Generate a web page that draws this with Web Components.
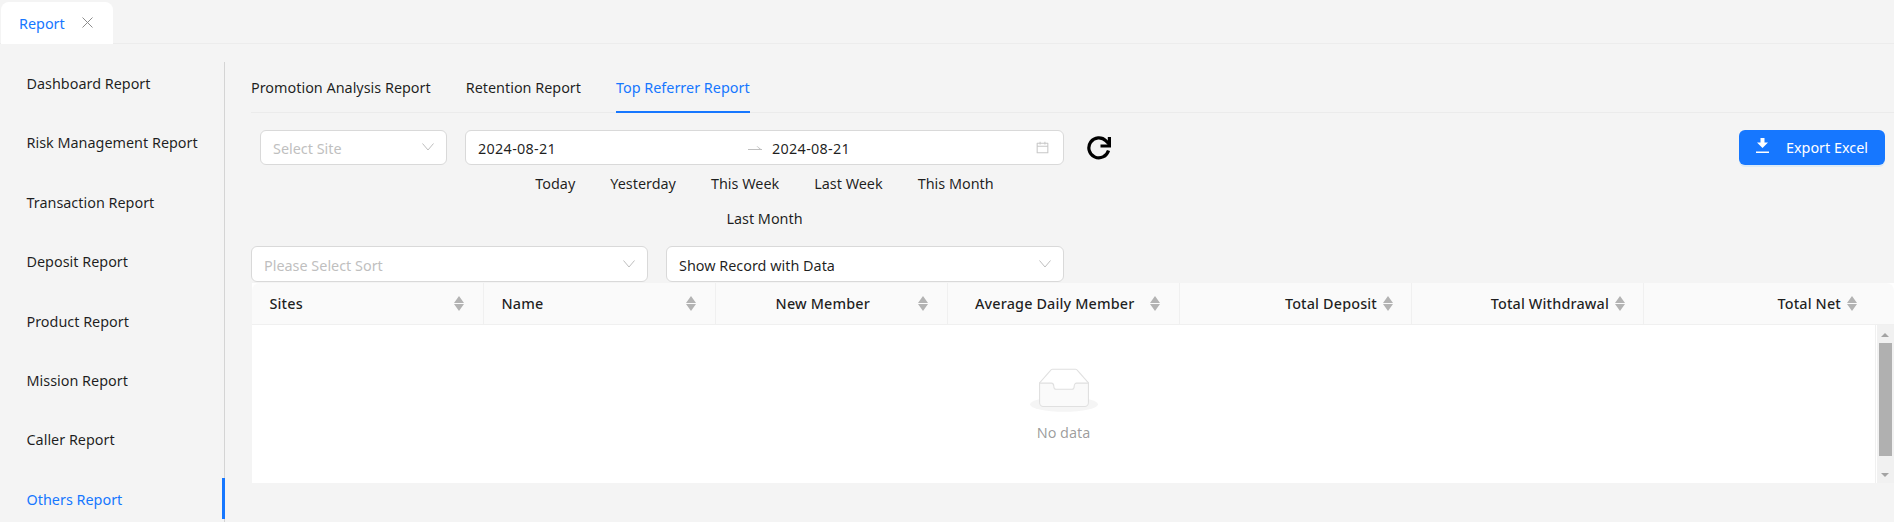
<!DOCTYPE html>
<html>
<head>
<meta charset="utf-8">
<title>Report</title>
<style>
  html, body { margin: 0; height: 100%; overflow: hidden; }
  body { background: #f4f4f4; color: rgba(0,0,0,.88); font: 14.4px/22px "Noto Sans", "Open Sans", sans-serif; }
</style>
</head>
<body>
<template id="drop-select">
  <style>
    :host { display: flex; align-items: center; box-sizing: border-box; height: 36px; background: #fff; border: 1px solid #d9d9d9; border-radius: 6px; padding: 2px 12px 0; }
    span { flex: 1; white-space: nowrap; }
    :host([placeholder]) span { color: #bfbfbf; }
    svg { width: 12px; height: 8px; fill: none; stroke: #bfbfbf; margin-top: -3px; }
  </style>
  <span><slot></slot></span>
  <svg viewBox="0 0 12 8"><path d="M.5.500 6 7 11.500.500"/></svg>
</template>

<template id="date-range">
  <style>
    :host { display: flex; align-items: center; box-sizing: border-box; height: 35px; background: #fff; border: 1px solid #d9d9d9; border-radius: 6px; padding: 2px 13px 0 12px; letter-spacing: .3px; }
    .from { flex: none; width: 270px; }
    .to { flex: 1; }
    .arrow { flex: none; width: 14px; height: 8px; margin-right: 10px; fill: #bfbfbf; margin-top: -2px; }
    .cal { flex: none; width: 15px; height: 15px; fill: #c8c8c8; margin-top: -3px; }
  </style>
  <span class="from"><slot name="from"></slot></span>
  <svg class="arrow" viewBox="0 0 14 8"><path d="M0 5h14v1H0zM9 2l4.500 3.500H12L8.500 2z"/></svg>
  <span class="to"><slot name="to"></slot></span>
  <svg class="cal" viewBox="0 0 1024 1024"><path d="M880 184H712v-64c0-4.400-3.600-8-8-8h-56c-4.400 0-8 3.600-8 8v64H384v-64c0-4.400-3.600-8-8-8h-56c-4.400 0-8 3.600-8 8v64H144c-17.700 0-32 14.300-32 32v664c0 17.700 14.300 32 32 32h736c17.700 0 32-14.300 32-32V216c0-17.700-14.300-32-32-32zm-40 656H184V460h656v380zM184 392V256h128v48c0 4.400 3.600 8 8 8h56c4.400 0 8-3.600 8-8v-48h256v48c0 4.400 3.600 8 8 8h56c4.400 0 8-3.600 8-8v-48h128v136H184z"/></svg>
</template>

<template id="top-tab">
  <style>
    :host { display: flex; align-items: center; gap: 17px; box-sizing: border-box; width: 112px; height: 42px; margin: 0 0 -1px 1px; padding: 2px 18px 0; background: #fff; border-radius: 8px 8px 0 0; color: #1677ff; }
    svg { width: 11px; height: 11px; stroke: #8c8c8c; stroke-width: 1; fill: none; margin-top: -3px; }
  </style>
  <slot></slot>
  <svg viewBox="0 0 11 11"><path d="M.5.500l10 10M10.500.500l-10 10"/></svg>
</template>

<template id="side-nav">
  <style>
    :host { display: flex; flex-direction: column; gap: 18.400px; box-sizing: border-box; width: 225px; flex: none; height: 478px; margin-top: 18px; border-right: 1px solid #d4d4d4; }
  </style>
  <slot></slot>
</template>

<template id="side-item">
  <style>
    :host { display: flex; align-items: center; height: 41px; padding: 3px 0 0 26.500px; box-sizing: border-box; white-space: nowrap; position: relative; flex: none; }
    :host([active]) { color: #1677ff; }
    :host([active])::after { content: ""; position: absolute; right: -1px; top: 0; bottom: 0; width: 3px; background: #1677ff; }
  </style>
  <slot></slot>
</template>

<template id="sub-tabs">
  <style>
    :host { display: flex; gap: 35px; height: 50px; margin-left: 26px; border-bottom: 1px solid #ebebeb; box-sizing: border-box; }
  </style>
  <slot></slot>
</template>

<template id="sub-tab">
  <style>
    :host { display: flex; align-items: center; height: 50px; box-sizing: border-box; position: relative; white-space: nowrap; }
    :host([active]) { color: #1677ff; }
    :host([active])::after { content: ""; position: absolute; left: 0; right: 0; bottom: 0; height: 2px; background: #1677ff; }
  </style>
  <slot></slot>
</template>

<template id="presets-row">
  <style>
    :host { display: flex; flex-wrap: wrap; justify-content: center; gap: 0 35px; width: 500px; margin: 0 auto; padding-top: 1px; }
    ::slotted(span) { height: 35px; line-height: 35px; }
  </style>
  <slot></slot>
</template>

<template id="data-table">
  <style>
    :host { display: block; background: #fff; margin-left: 27px; }
    .head { display: grid; grid-template-columns: repeat(7, 232px) 1fr; height: 42px; background: #fafafa; border-bottom: 1px solid #f0f0f0; box-sizing: border-box; border-radius: 8px 8px 0 0; }
    .body { display: flex; height: 158px; }
    .empty { flex: 1; display: flex; flex-direction: column; align-items: center; padding-top: 43px; color: rgba(0,0,0,.4); border-right: 1px solid #f0f0f0; }
    .empty svg { width: 68px; height: 44px; margin-bottom: 10px; }
    .bar { width: 17px; margin-left: 1px; background: #f1f1f1; position: relative; }
    .thumb { position: absolute; left: 2px; right: 2px; top: 18px; height: 113px; background: #b0b0b0; }
    .tri { position: absolute; left: 4px; width: 0; height: 0; border-left: 4px solid transparent; border-right: 4px solid transparent; }
    .up { top: 8px; border-bottom: 4px solid #a3a3a3; }
    .down { bottom: 6px; border-top: 4px solid #a3a3a3; }
  </style>
  <div class="head"><slot name="head"></slot><div></div></div>
  <div class="body">
    <div class="empty">
      <svg viewBox="0 0 64 41"><g transform="translate(0 1)" fill="none" fill-rule="evenodd"><ellipse cx="32" cy="33" rx="32" ry="7" fill="#f5f5f5"/><g stroke="#e0e0e0" fill="#fff"><path d="M55 12.760 44.850 1.260C44.360.500 43.650 0 42.900 0H21.100c-.750 0-1.460.500-1.950 1.260L9 12.760V22h46v-9.240z"/><path d="M41.610 15.930c0-1.610 1-2.930 2.240-2.930H55v18.140C55 33.260 53.680 35 52.050 35h-40.100C10.320 35 9 33.260 9 31.140V13h11.150c1.240 0 2.240 1.320 2.240 2.930 0 1.610 1.010 2.910 2.250 2.910h14.720c1.240 0 2.250-1.310 2.250-2.910z" fill="#fafafa"/></g></g></svg>
      <slot name="empty"></slot>
    </div>
    <div class="bar"><div class="tri up"></div><div class="thumb"></div><div class="tri down"></div></div>
  </div>
</template>

<template id="head-cell">
  <style>
    :host { display: flex; align-items: center; gap: 6px; padding: 1px 20px 0 17.500px; font-weight: 500; letter-spacing: .15px; position: relative; white-space: nowrap; }
    :host([align="right"]) { padding-right: 19px; }
    .t { flex: 1; }
    :host([align="center"]) .t { text-align: center; }
    :host([align="right"]) .t { text-align: right; }
    :host([sep])::after { content: ""; position: absolute; right: 0; top: 0; bottom: 0; width: 1px; background: #f0f0f0; }
    svg { flex: none; width: 10px; height: 15px; fill: #b3b3b3; margin-top: -1px; }
  </style>
  <span class="t"><slot></slot></span>
  <svg viewBox="0 0 10 15"><path d="M5 0l5 7H0zM5 15l5-7H0z"/></svg>
</template>

<script>
  class ShadowBase extends HTMLElement {
    connectedCallback() {
      if (this.shadowRoot) return;
      var template = document.getElementById(this.constructor.templateId);
      this.attachShadow({ mode: 'open' }).appendChild(template.content.cloneNode(true));
    }
  }
  function define(name) {
    customElements.define(name, class extends ShadowBase {
      static get templateId() { return name; }
    });
  }
  ['drop-select', 'date-range', 'top-tab', 'side-nav', 'side-item', 'sub-tabs', 'sub-tab', 'presets-row', 'data-table', 'head-cell'].forEach(define);

  class ExportButton extends HTMLElement {
    connectedCallback() {
      if (this.shadowRoot) return;
      this.attachShadow({ mode: 'open' }).innerHTML = `
        <style>
          :host { display: flex; align-items: center; justify-content: center; gap: 17px; box-sizing: border-box; width: 146px; height: 35px; background: #1677ff; color: #fff; border-radius: 6px; box-shadow: 0 2px 0 rgba(5,145,255,.1); white-space: nowrap; }
          svg { width: 13px; height: 15px; fill: #fff; margin-top: -5px; }
        </style>
        <svg viewBox="0 0 13 15"><path d="M4.500 0h4v4.500H12L6.500 10 1 4.500h3.500zM0 13.500h13V15H0z"/></svg>
        <slot></slot>`;
    }
  }
  customElements.define('export-button', ExportButton);
</script>

<div style="display:flex;flex-direction:column;height:522px;overflow:hidden">
  <div style="display:flex;align-items:flex-end;height:44px;flex:none;box-sizing:border-box;border-bottom:1px solid #ececec">
    <top-tab>Report</top-tab>
  </div>
  <div style="display:flex;flex:1;min-width:0">
    <side-nav>
      <side-item>Dashboard Report</side-item>
      <side-item>Risk Management Report</side-item>
      <side-item>Transaction Report</side-item>
      <side-item>Deposit Report</side-item>
      <side-item>Product Report</side-item>
      <side-item>Mission Report</side-item>
      <side-item>Caller Report</side-item>
      <side-item active>Others Report</side-item>
    </side-nav>
    <div style="flex:1;min-width:0;display:flex;flex-direction:column;padding-top:19px">
      <sub-tabs>
        <sub-tab>Promotion Analysis Report</sub-tab>
        <sub-tab>Retention Report</sub-tab>
        <sub-tab active>Top Referrer Report</sub-tab>
      </sub-tabs>
      <div style="display:flex;align-items:flex-start;margin:17px 9px 0 35px">
        <drop-select placeholder style="width:187px;height:35px">Select Site</drop-select>
        <div style="margin-left:18px;width:599px">
          <date-range><span slot="from">2024-08-21</span><span slot="to">2024-08-21</span></date-range>
          <presets-row>
            <span>Today</span><span>Yesterday</span><span>This Week</span><span>Last Week</span><span>This Month</span><span>Last Month</span>
          </presets-row>
        </div>
        <svg style="margin:6px 0 0 23px;flex:none" width="24" height="24" viewBox="0 0 24 24" fill="none" stroke="#000" stroke-width="3.200"><path d="M21.500 14.500A10 10 0 1 1 19 4.800L22 8"/><path d="M22.400 1V10H13.500"/></svg>
        <div style="flex:1"></div>
        <export-button>Export Excel</export-button>
      </div>
      <div style="display:flex;gap:18px;margin:10px 0 0 26px">
        <drop-select placeholder style="width:397px;padding-top:3px">Please Select Sort</drop-select>
        <drop-select style="width:398px;padding-top:3px">Show Record with Data</drop-select>
      </div>
      <data-table style="margin-top:1px">
        <head-cell slot="head" sep>Sites</head-cell>
        <head-cell slot="head" sep>Name</head-cell>
        <head-cell slot="head" sep align="center">New Member</head-cell>
        <head-cell slot="head" sep align="center">Average Daily Member</head-cell>
        <head-cell slot="head" sep align="right">Total Deposit</head-cell>
        <head-cell slot="head" sep align="right">Total Withdrawal</head-cell>
        <head-cell slot="head" align="right">Total Net</head-cell>
        <span slot="empty">No data</span>
      </data-table>
    </div>
  </div>
</div>
</body>
</html>
